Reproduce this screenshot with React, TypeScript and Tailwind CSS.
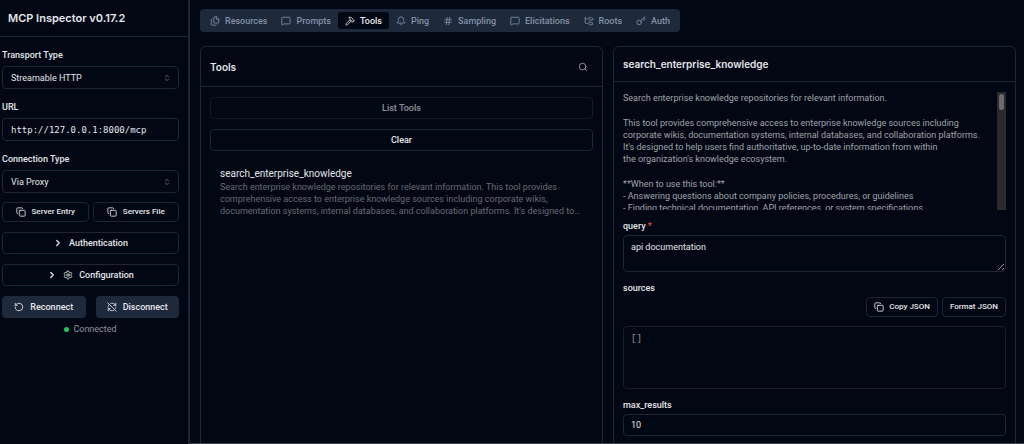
import type { ReactNode } from "react";
import {
  Bell,
  ChevronRight,
  ChevronsUpDown,
  Copy,
  Files,
  FolderTree,
  Hammer,
  Hash,
  Key,
  MessageSquare,
  RefreshCwOff,
  RotateCcw,
  Search,
  Settings,
} from "lucide-react";
import { clsx } from "clsx";

const tabs = [
  { name: "Resources", icon: Files },
  { name: "Prompts", icon: MessageSquare },
  { name: "Tools", icon: Hammer },
  { name: "Ping", icon: Bell },
  { name: "Sampling", icon: Hash },
  { name: "Elicitations", icon: MessageSquare },
  { name: "Roots", icon: FolderTree },
  { name: "Auth", icon: Key },
];

function Button({
  children,
  className,
  disabled,
}: {
  children: ReactNode;
  className?: string;
  disabled?: boolean;
}) {
  return (
    <button
      type="button"
      disabled={disabled}
      className={clsx(
        "flex items-center justify-center rounded border font-medium whitespace-nowrap disabled:opacity-60",
        className,
      )}
    >
      {children}
    </button>
  );
}

function SelectField({ id, label, value }: { id: string; label: string; value: string }) {
  return (
    <div className="flex flex-col gap-1">
      <label htmlFor={id} className="h-3.5 font-medium">
        {label}
      </label>
      <div className="relative">
        <select
          id={id}
          defaultValue={value}
          className="block h-[23px] w-full appearance-none rounded border border-[#1b2636] bg-transparent px-2"
        >
          <option>{value}</option>
        </select>
        <ChevronsUpDown className="pointer-events-none absolute top-2 right-2 size-2 text-[#8b8f98]" />
      </div>
    </div>
  );
}

function Sidebar() {
  return (
    <aside className="flex w-[190px] shrink-0 flex-col border-r-2 border-[#1c2636]">
      <div className="flex h-[37px] items-center border-b border-[#1b2636] px-2">
        <h1 className="font-['Inter',sans-serif] text-[11px] font-semibold">MCP Inspector v0.17.2</h1>
      </div>
      <div className="flex flex-col gap-2.5 py-[11px] pr-[9px] pl-0.5">
        <div className="-mb-px flex flex-col gap-[11px]">
          <SelectField id="transport" label="Transport Type" value="Streamable HTTP" />
          <div className="flex flex-col gap-1">
            <label htmlFor="url" className="h-3.5 font-medium">
              URL
            </label>
            <input
              id="url"
              defaultValue="http://127.0.0.1:8000/mcp"
              className="h-[23px] w-full rounded border border-[#1b2636] bg-transparent px-2 font-['DejaVu_Sans_Mono',monospace]"
            />
          </div>
          <SelectField id="connection" label="Connection Type" value="Via Proxy" />
        </div>
        <div className="grid grid-cols-2 gap-1">
          <Button className="h-5 gap-1.5 border-[#1b2636] text-[8px]">
            <Copy className="size-2.5" />
            Server Entry
          </Button>
          <Button className="h-5 gap-1.5 border-[#1b2636] text-[8px]">
            <Copy className="size-2.5" />
            Servers File
          </Button>
        </div>
        <Button className="h-[22px] gap-1.5 border-[#1b2636]">
          <ChevronRight className="size-2.5" strokeWidth={3} />
          Authentication
        </Button>
        <Button className="h-[22px] gap-1.5 border-[#1b2636]">
          <ChevronRight className="size-2.5" strokeWidth={3} />
          <Settings className="size-2.5" />
          Configuration
        </Button>
        <div className="flex flex-col gap-1">
          <div className="grid grid-cols-2 gap-2.5">
            <Button className="h-[22px] gap-1.5 border-transparent bg-[#1e293b]">
              <RotateCcw className="size-2.5" />
              Reconnect
            </Button>
            <Button className="h-[22px] gap-1.5 border-transparent bg-[#1e293b]">
              <RefreshCwOff className="size-2.5" />
              Disconnect
            </Button>
          </div>
          <div className="flex h-3.5 items-center justify-center gap-1 text-[#8f939b]">
            <span className="size-[5px] rounded-full bg-[#22c55e]" />
            Connected
          </div>
        </div>
      </div>
    </aside>
  );
}

function TabBar() {
  return (
    <div role="tablist" className="flex h-[23px] w-fit items-center rounded bg-[#1e293b] px-[3px] text-[#8391a7]">
      {tabs.map(({ name, icon: Icon }) => (
        <button
          key={name}
          type="button"
          role="tab"
          aria-selected={name === "Tools"}
          className={clsx(
            "flex h-[17px] items-center gap-[5px] rounded-[3px] px-[7px] font-medium",
            name === "Tools" && "bg-[#010814] text-[#e8eaed]",
          )}
        >
          <Icon className="size-2.5" />
          {name}
        </button>
      ))}
    </div>
  );
}

function ToolList() {
  return (
    <section className="flex min-w-0 flex-col rounded-t-md border border-b-0 border-[#1b2636]">
      <div className="flex h-10 items-center justify-between border-b border-[#1b2636] pr-3.5 pl-[9px]">
        <h3 className="font-['Inter',sans-serif] text-[10px] font-semibold">Tools</h3>
        <button type="button" aria-label="Search" className="text-[#a3a7ae]">
          <Search className="size-2.5" />
        </button>
      </div>
      <div className="flex flex-col gap-2.5 p-[9px] pt-2.5">
        <Button disabled className="h-[22px] border-[#1b2636]">
          List Tools
        </Button>
        <Button className="h-[22px] border-[#1b2636]">Clear</Button>
        <div className="flex flex-col px-2.5 pt-1.5">
          <span className="text-[10px] leading-[14px]">search_enterprise_knowledge</span>
          <p className="line-clamp-3 leading-3 text-[#666a72]">
            Search enterprise knowledge repositories for relevant information. This tool provides
            comprehensive access to enterprise knowledge sources including corporate wikis,
            documentation systems, internal databases, and collaboration platforms. It's designed to
            help users find authoritative, up-to-date information from within the organization's
            knowledge ecosystem.
          </p>
        </div>
      </div>
    </section>
  );
}

function ToolDetail() {
  return (
    <section className="flex min-w-0 flex-col rounded-t-md border border-b-0 border-[#1b2636]">
      <div className="flex h-[35px] shrink-0 items-center border-b border-[#1b2636] px-[9px]">
        <h3 className="font-['Inter',sans-serif] text-[10px] font-semibold">search_enterprise_knowledge</h3>
      </div>
      <div className="flex flex-col px-[9px] pt-2.5">
        <div className="flex h-[118px] overflow-hidden">
          <div className="flex flex-1 flex-col gap-[13px] leading-3 text-[#a0a3a9]">
            <p>Search enterprise knowledge repositories for relevant information.</p>
            <p>
              This tool provides comprehensive access to enterprise knowledge sources including
              <br />
              corporate wikis, documentation systems, internal databases, and collaboration platforms.
              <br />
              It's designed to help users find authoritative, up-to-date information from within
              <br />
              the organization's knowledge ecosystem.
            </p>
            <p>
              **When to use this tool:**
              <br />- Answering questions about company policies, procedures, or guidelines
              <br />- Finding technical documentation, API references, or system specifications
            </p>
          </div>
          <div className="w-[9px] shrink-0 bg-[#2b2b2b] px-0.5 pt-0.5">
            <div className="h-4 rounded-full bg-[#6b6b6b]" />
          </div>
        </div>

        <label htmlFor="query" className="mt-2.5 mb-[3px] h-3 leading-3 font-medium">
          query <span className="text-[#ef4444]">*</span>
        </label>
        <textarea
          id="query"
          defaultValue="api documentation"
          className="h-[37px] w-full rounded border border-[#1b2636] bg-transparent px-[7px] py-[5px] leading-3"
        />

        <label htmlFor="sources" className="mt-2.5 h-3 leading-3 font-medium">
          sources
        </label>
        <div className="mt-[3px] mb-[9px] flex justify-end gap-1">
          <Button className="h-5 gap-[5px] border-[#1b2636] px-[7px] text-[8px]">
            <Copy className="size-2.5" />
            Copy JSON
          </Button>
          <Button className="h-5 border-[#1b2636] px-[7px] text-[8px]">Format JSON</Button>
        </div>
        <textarea
          id="sources"
          defaultValue="[]"
          className="h-[63px] w-full resize-none rounded border border-[#151f2e] bg-transparent px-[7px] py-1.5 font-['Liberation_Mono',monospace] leading-3 text-[#8f939b]"
        />

        <label htmlFor="max-results" className="mt-2.5 mb-[3px] h-3 leading-3 font-medium">
          max_results
        </label>
        <input
          id="max-results"
          defaultValue="10"
          className="h-[22px] w-full rounded border border-[#1b2636] bg-transparent px-[7px]"
        />
      </div>
    </section>
  );
}

export default function App() {
  return (
    <div className="flex h-screen overflow-hidden bg-[#010814] font-['Roboto',sans-serif] text-[9px] leading-[14px] text-[#e4e6ea]">
      <Sidebar />
      <div className="flex min-w-0 flex-1 flex-col">
        <main className="flex min-h-0 flex-1 flex-col gap-3.5 overflow-hidden pt-[9px] pr-2 pl-2.5">
          <TabBar />
          <div className="grid min-h-0 flex-1 grid-cols-2 gap-2.5">
            <ToolList />
            <ToolDetail />
          </div>
        </main>
        <div className="h-px shrink-0 bg-[#3a4250]" />
      </div>
    </div>
  );
}
